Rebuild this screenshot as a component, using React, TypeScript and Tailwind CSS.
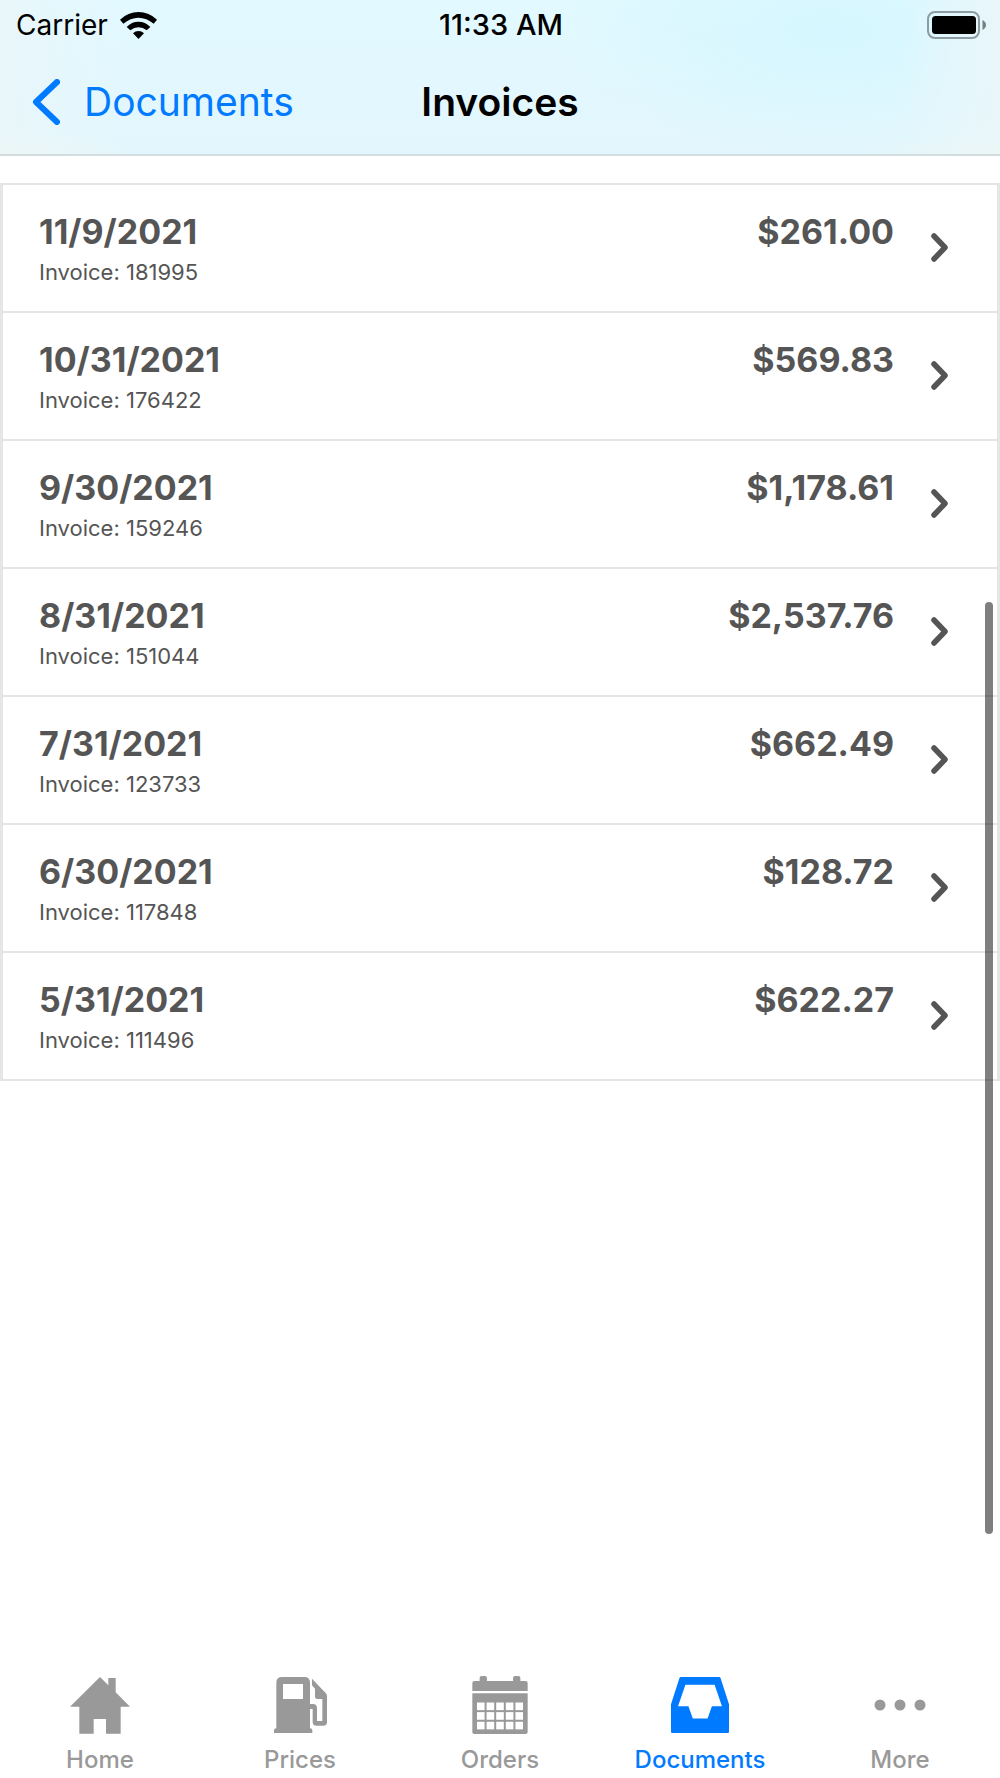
import React from "react";

const invoices = [
  { date: "11/9/2021", number: "181995", total: "$261.00" },
  { date: "10/31/2021", number: "176422", total: "$569.83" },
  { date: "9/30/2021", number: "159246", total: "$1,178.61" },
  { date: "8/31/2021", number: "151044", total: "$2,537.76" },
  { date: "7/31/2021", number: "123733", total: "$662.49" },
  { date: "6/30/2021", number: "117848", total: "$128.72" },
  { date: "5/31/2021", number: "111496", total: "$622.27" },
];

function WifiIcon() {
  return (
    <svg className="h-[27px] w-[37px]" viewBox="0 0 111 81" aria-hidden="true">
      <path d="M0 23 Q24 0 55.500 0 Q87 0 111 23 L101 35 Q80 17 55.500 17 Q31 17 10 35 Z" />
      <path d="M20 45 Q35 29 55.500 29 Q76 29 91 45 L80 55 Q69 46 55.500 46 Q42 46 31 55 Z" />
      <path d="M39 64 Q46 57 55.500 57 Q65 57 72 64 L55.500 81 Z" />
    </svg>
  );
}

function BatteryIcon() {
  return (
    <svg className="h-7 w-[59px]" viewBox="0 0 59 28" aria-hidden="true">
      <rect x="1" y="1" width="51" height="26" rx="7" fill="none" stroke="#8d9ca1" strokeWidth="2" />
      <rect x="5" y="5" width="44" height="18" rx="3.500" fill="#000" />
      <path d="M55.500 9 Q59 11 59 14 Q59 17 55.500 19 Z" fill="#777f82" />
    </svg>
  );
}

function HomeIcon() {
  return (
    <svg className="h-[57px] w-[60px]" viewBox="91 51 180 171" fill="currentColor" aria-hidden="true">
      <path d="M181 51 L206 76 V54 H228 V97 L271 140 H243 V221 H199 V177 H162 V221 H119 V140 H91 Z" />
    </svg>
  );
}

function PumpIcon() {
  return (
    <svg className="h-14 w-[53px]" viewBox="702 51 159 168" fill="currentColor" aria-hidden="true">
      <path
        fillRule="evenodd"
        d="M709 205 V68 Q709 51 726 51 H793 Q810 51 810 68 V132 H818 Q831 132 831 145 V183 H847 V117 H832 Q825 117 825 110 V86 L816 76 V56 L857 99 Q861 103 861 109 V186 Q861 197 850 197 H829 Q818 197 818 186 V147 H810 V205 Q817 205 817 211 V219 H702 V211 Q702 205 709 205 Z M729 72 V117 H789 V72 Z"
      />
    </svg>
  );
}

function CalendarIcon() {
  const columns = [167, 196, 225, 254, 283];
  const rows = [128, 157, 186];
  return (
    <svg className="h-[58px] w-14" viewBox="153 48 167 175" fill="currentColor" aria-hidden="true">
      <path d="M153 93 V69 Q153 63 159 63 H175 V54 Q175 48 181 48 H191 Q197 48 197 54 V63 H276 V54 Q276 48 282 48 H292 Q298 48 298 54 V63 H314 Q320 63 320 69 V93 Z" />
      <path d="M153 100 H320 V217 Q320 223 314 223 H159 Q153 223 153 217 Z" />
      {rows.map((y) =>
        columns.map((x) => <rect key={`${x}-${y}`} x={x} y={y} width="23" height="23" fill="#fff" />),
      )}
    </svg>
  );
}

function TrayIcon() {
  return (
    <svg className="h-14 w-[58px]" viewBox="210 51 173 167" fill="currentColor" aria-hidden="true">
      <path
        fillRule="evenodd"
        d="M240 51 H353 Q357 51 358 55 L383 132 V214 Q383 218 379 218 H214 Q210 218 210 214 V132 L235 55 Q236 51 240 51 Z M253 74 L231 138 H262 L275 175 H319 L332 138 H362 L340 74 Z"
      />
    </svg>
  );
}

function DotsIcon() {
  return (
    <svg className="h-3 w-[52px]" viewBox="0 0 52 12" fill="currentColor" aria-hidden="true">
      <circle cx="6" cy="6" r="5.500" />
      <circle cx="26" cy="6" r="5.500" />
      <circle cx="46" cy="6" r="5.500" />
    </svg>
  );
}

const tabs = [
  { label: "Home", Icon: HomeIcon, active: false },
  { label: "Prices", Icon: PumpIcon, active: false },
  { label: "Orders", Icon: CalendarIcon, active: false },
  { label: "Documents", Icon: TrayIcon, active: true },
  { label: "More", Icon: DotsIcon, active: false },
];

export default function App() {
  return (
    <div className="relative flex min-h-screen flex-col bg-white font-['Inter',sans-serif]">
      <header className="border-b-2 border-[#d2dde0] bg-[#e2f7fd] bg-[radial-gradient(ellipse_at_0%_100%,#ecf6f5_0%,transparent_10%),radial-gradient(ellipse_at_100%_100%,#ebf6f5_0%,transparent_10%),linear-gradient(90deg,#e9f6fa_0%,transparent_12%,transparent_90%,#e9f6fa_100%),radial-gradient(ellipse_280px_130px_at_83%_20%,#d6f7ff_0%,transparent_100%),linear-gradient(180deg,#e1f9ff_0%,#e3f6fd_100%)]">
        <div className="grid h-[50px] grid-cols-3 items-center pr-[14px] pl-4 text-black">
          <div className="flex items-center gap-3 text-[28px] leading-8">
            <span>Carrier</span>
            <WifiIcon />
          </div>
          <span className="text-center text-[29px] leading-8 font-medium">11:33 AM</span>
          <div className="flex justify-end">
            <BatteryIcon />
          </div>
        </div>
        <div className="grid h-[104px] grid-cols-3 items-center px-8">
          <button type="button" className="flex items-center gap-6 text-[39px] leading-12 text-[#007aff]">
            <svg className="h-[46px] w-7 shrink-0" viewBox="0 0 28 46" fill="none" aria-hidden="true">
              <path d="M25 3 L4 23 L25 43" stroke="currentColor" strokeWidth="6" strokeLinecap="round" strokeLinejoin="round" />
            </svg>
            <span>Documents</span>
          </button>
          <h1 className="text-center text-[39px] leading-12 font-semibold text-black">Invoices</h1>
        </div>
      </header>

      <main className="flex-1 pt-[27px]">
        <ul className="border-x-3 border-t-2 border-[#e5e5e5] text-[#555]">
          {invoices.map((invoice) => (
            <li key={invoice.number} className="border-b-2 border-[#e5e5e5]">
              <a href={`#invoice-${invoice.number}`} className="flex h-[126px] items-center pr-[48px] pl-9">
                <span className="flex flex-1 items-start justify-between">
                  <span className="flex flex-col">
                    <span className="text-[34px] leading-12 font-bold">{invoice.date}</span>
                    <span className="text-[22px] leading-8">Invoice: {invoice.number}</span>
                  </span>
                  <span className="text-[34px] leading-12 font-bold">{invoice.total}</span>
                </span>
                <svg className="ml-9 h-[30px] w-[19px] shrink-0" viewBox="0 0 19 30" fill="none" aria-hidden="true">
                  <path d="M4 3 L15 14.500 L4 26" stroke="currentColor" strokeWidth="5.500" strokeLinecap="round" strokeLinejoin="round" />
                </svg>
              </a>
            </li>
          ))}
        </ul>
      </main>

      <nav aria-label="Main" className="grid grid-cols-5 pb-[2px]">
        {tabs.map(({ label, Icon, active }) => (
          <a
            key={label}
            href={`#${label.toLowerCase()}`}
            aria-current={active ? "page" : undefined}
            className={`flex flex-col items-center gap-2.5 text-[24px] leading-8 font-medium ${active ? "text-[#007aff]" : "text-[#999]"}`}
          >
            <span className="flex h-[58px] items-center">
              <Icon />
            </span>
            <span>{label}</span>
          </a>
        ))}
      </nav>

      <div className="absolute top-[602px] right-[7px] h-[932px] w-2 rounded-full bg-black/50" aria-hidden="true" />
    </div>
  );
}
